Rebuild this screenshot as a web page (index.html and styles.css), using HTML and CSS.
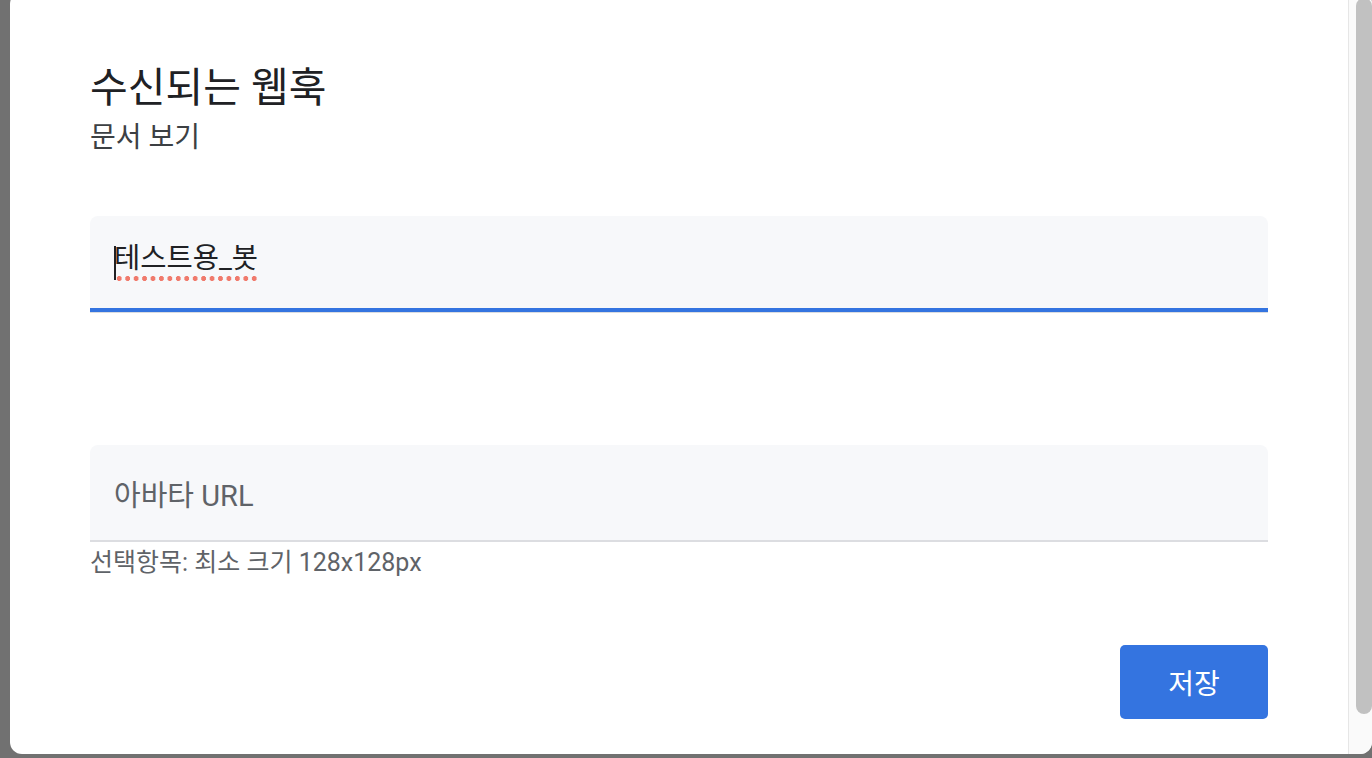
FILE: index.html
```html
<!DOCTYPE html>
<html lang="ko">
<head>
<meta charset="utf-8">
<title>수신되는 웹훅</title>
<link rel="stylesheet" href="styles.css">
</head>
<body>
<div class="dialog">
  <div class="content">
    <header class="head">
      <h1 class="title">수신되는 웹훅</h1>
      <div class="subtitle">문서 보기</div>
    </header>
    <div class="field field-focused">
      <div class="field-box">
        <span class="caret"></span><span class="value">테스트용_봇</span>
      </div>
      <div class="field-bar"></div>
    </div>
    <div class="field field-avatar">
      <div class="field-box">
        <span class="placeholder">아바타 URL</span>
      </div>
      <div class="field-line"></div>
      <div class="helper">선택항목: 최소 크기 128x128px</div>
    </div>
    <div class="actions">
      <button class="save">저장</button>
    </div>
  </div>
  <div class="scrollbar"><div class="thumb"></div></div>
</div>
</body>
</html>
```

FILE: styles.css
```css
html, body {
  margin: 0;
  padding: 0;
  height: 100%;
  overflow: hidden;
}
body {
  background: #717171;
  font-family: Roboto, "Noto Sans CJK KR", sans-serif;
}
.dialog {
  margin: -8px 0 0 10px;
  width: 1362px;
  height: 762px;
  background: #ffffff;
  border-radius: 12px;
  display: flex;
  overflow: hidden;
}
.content {
  flex: 1;
  padding: 0 80px 0 80px;
  display: flex;
  flex-direction: column;
}
.head {
  padding-top: 70px;
}
.title {
  margin: 0;
  font-size: 41px;
  font-weight: 400;
  line-height: 52px;
  color: #202124;
}
.subtitle {
  font-size: 28px;
  line-height: 36px;
  color: #3c4043;
  margin-top: 6px;
}
.field {
  display: flex;
  flex-direction: column;
}
.field-focused {
  margin-top: 60px;
}
.field-box {
  height: 92px;
  background: #f7f8fa;
  border-radius: 8px 8px 0 0;
  display: flex;
  align-items: center;
  padding-left: 24px;
  font-size: 28.5px;
}
.field-avatar .field-box {
  height: 96px;
  font-size: 29px;
}
.value {
  display: inline-block;
  line-height: 34px;
  padding-bottom: 5px;
  margin-top: -2px;
  color: #202124;
  background-image: radial-gradient(circle, #f07a6c 2.2px, transparent 2.8px);
  background-size: 8.45px 5px;
  background-repeat: repeat-x;
  background-position: 1px bottom;
}
.caret {
  width: 2px;
  height: 34px;
  background: #202124;
  margin-right: -2px;
  position: relative;
  top: 1px;
  z-index: 1;
}
.field-bar {
  height: 4px;
  background: #3474e0;
  border-bottom: 1px solid #dadce0;
}
.field-avatar {
  margin-top: 132px;
}
.placeholder {
  color: #5f6368;
}
.field-line {
  height: 2px;
  background: #dcdde1;
  margin-top: -1px;
}
.helper {
  font-size: 25px;
  line-height: 32px;
  color: #5f6368;
  margin-top: 5px;
}
.actions {
  display: flex;
  justify-content: flex-end;
  margin-top: 66px;
}
.save {
  width: 148px;
  height: 74px;
  border: none;
  border-radius: 5px;
  background: #3474e0;
  color: #ffffff;
  font-family: Roboto, "Noto Sans CJK KR", sans-serif;
  font-size: 28px;
  padding: 0;
}
.scrollbar {
  width: 23px;
  border-left: 1px solid #e6e6e6;
  background: #fafafa;
  display: flex;
  justify-content: flex-end;
}
.thumb {
  width: 16px;
  height: 716px;
  margin-top: 6px;
  border-radius: 8px;
  background: #c1c1c1;
}
```
